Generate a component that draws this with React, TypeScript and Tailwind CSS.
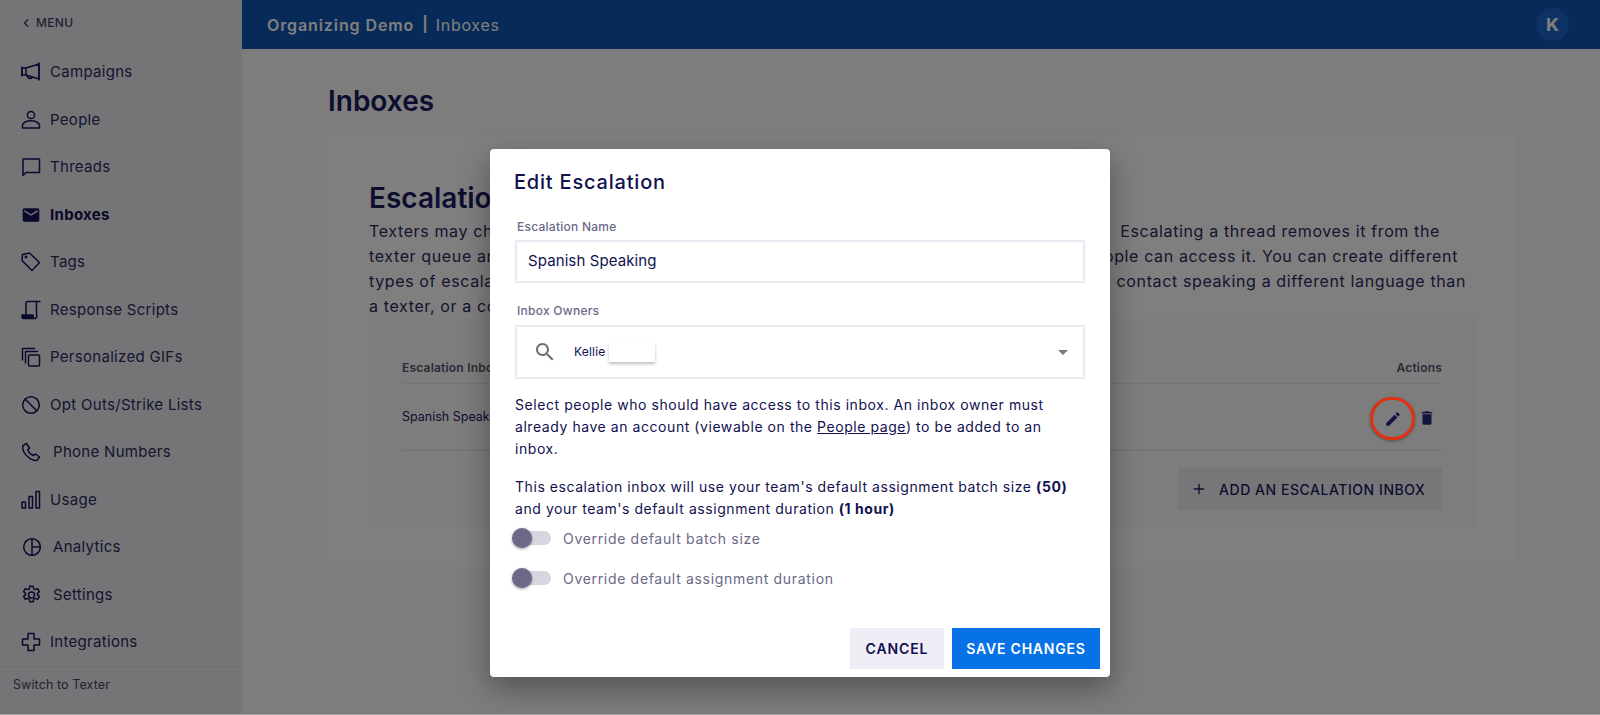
import { ReactNode } from "react";
import { ChevronLeft, Plus } from "lucide-react";

const navy = "#14145a";

const icon = (children: ReactNode) => (
  <svg width="20" height="20" viewBox="0 0 20 20" fill="none" stroke="currentColor" strokeWidth="1.5" strokeLinejoin="round" strokeLinecap="round">
    {children}
  </svg>
);

const navItems: { label: string; icon: ReactNode; active?: boolean; wide?: boolean }[] = [
  {
    label: "Campaigns",
    icon: icon(
      <>
        <path d="M1 6h4l13-4v15L5 13H1z" />
        <path d="M1 5v9M18 1v17M5 6v7" />
        <path d="M6 13.500a3 3 0 0 0 5.500 1.500" />
      </>
    ),
  },
  {
    label: "People",
    icon: icon(
      <>
        <circle cx="10" cy="5" r="3.600" />
        <path d="M1.500 18v-2.500C1.500 12.500 6 10.800 10 10.800s8.500 1.700 8.500 4.700V18z" />
      </>
    ),
  },
  {
    label: "Threads",
    icon: icon(<path d="M2 2h16.500v13.500H5L2 18.500z" />),
  },
  {
    label: "Inboxes",
    active: true,
    icon: (
      <svg width="20" height="20" viewBox="0 0 24 24" fill="currentColor">
        <path d="M20 4H4c-1.100 0-1.990.900-1.990 2L2 18c0 1.100.900 2 2 2h16c1.100 0 2-.900 2-2V6c0-1.100-.900-2-2-2zm0 4l-8 5-8-5V6l8 5 8-5v2z" />
      </svg>
    ),
  },
  {
    label: "Tags",
    icon: icon(
      <>
        <path d="M1.500 2.500 8.500 1l10 9.500-7.500 8-10-10z" />
        <circle cx="5" cy="5" r=".7" />
      </>
    ),
  },
  {
    label: "Response Scripts",
    icon: icon(
      <>
        <path d="M5 14.500V3a1.500 1.500 0 0 1 1.500-1.500H19" />
        <path d="M15.500 1.500V14a4 4 0 0 1-1 4.500" />
        <path d="M1 15h11c0 2 .5 3.500 1.500 3.500H2.500A1.500 1.500 0 0 1 1 17z" fill="currentColor" />
      </>
    ),
  },
  {
    label: "Personalized GIFs",
    icon: icon(
      <>
        <path d="M1.500 13V1.500h12" />
        <path d="M4.500 16V4.500h12" />
        <rect x="7.500" y="8" width="11" height="11" rx="1" />
      </>
    ),
  },
  {
    label: "Opt Outs/Strike Lists",
    icon: icon(
      <>
        <circle cx="10" cy="10" r="8.300" />
        <path d="m4.200 4.200 11.600 11.600" />
      </>
    ),
  },
  {
    label: "Phone Numbers",
    wide: true,
    icon: icon(
      <path d="M5.500 1.500 2 3.500c-1 4 1.500 8 4 10.500s6 5 10 4.500l2.500-3.500-4-3-2.500 1.500c-2-1-4.500-3.500-5.200-5.500L8.500 6z" />
    ),
  },
  {
    label: "Usage",
    icon: icon(
      <>
        <rect x="1" y="12" width="3.500" height="6" />
        <rect x="8" y="6.500" width="3.500" height="11.500" />
        <rect x="15" y="1.500" width="3.500" height="16.500" />
      </>
    ),
  },
  {
    label: "Analytics",
    wide: true,
    icon: icon(
      <>
        <circle cx="11" cy="10" r="8.300" />
        <path d="M11 1.700v16.600M11 10h8.300" />
      </>
    ),
  },
  {
    label: "Settings",
    wide: true,
    icon: icon(
      <>
        <circle cx="10.500" cy="10" r="3" />
        <path d="M8.800 1.200h3.400l.5 2.600 1.500.8 2.500-.9 1.700 2.900-2 1.800v1.200l2 1.800-1.700 2.900-2.500-.9-1.500.8-.5 2.600H8.800l-.5-2.600-1.500-.8-2.500.9-1.700-2.900 2-1.800V8.400l-2-1.800 1.700-2.900 2.500.9 1.500-.8z" />
      </>
    ),
  },
  {
    label: "Integrations",
    icon: icon(<path d="M7 1.500h6v5.500h5.500v6H13v5.500H7V13H1.500V7H7z" />),
  },
];

function Toggle({ label }: { label: string }) {
  return (
    <div className="flex items-center h-[22px]">
      <div className="relative w-[39px] h-[22px] flex items-center">
        <div className="w-[36px] ml-[3px] h-[14px] rounded-full bg-[#d6d5e0]" />
        <div className="absolute left-0 top-[1px] w-[20px] h-[20px] rounded-full bg-[#6b6888] shadow-[0_1px_3px_rgba(0,0,0,0.4)]" />
      </div>
      <span className="ml-[12px] text-[14px] tracking-[0.68px] text-[#6b6888]">{label}</span>
    </div>
  );
}

const bodyLines: [string, string, string][] = [
  ["Texters may choose to escalate a thread if they need", "Escalating a thread removes it from the", "w-[1071px]"],
  ["texter queue and places it in an inbox that only certain pe", "ople can access it. You can create different", "w-[1089px]"],
  ["types of escalation inboxes for different needs, like a ", "contact speaking a different language than", "w-[1097px]"],
  ["a texter, or a contact who needs extra follow up.", "", "w-[1097px]"],
];

export default function App() {
  return (
    <div className="relative w-[1600px] h-[715px] overflow-hidden flex bg-[#fafafa] text-[#1b1b5e] font-['Inter','Liberation_Sans',sans-serif]">
      <aside className="w-[242px] shrink-0 flex flex-col bg-[#eaeaf0]">
        <div className="h-[46px] pt-[2px] mb-[4px] pl-[20px] flex items-center gap-[4px] text-[12px] font-medium tracking-[0.3px] text-[#444466]">
          <ChevronLeft size={12} strokeWidth={3.5} />
          <span>MENU</span>
        </div>
        <nav className="flex flex-col">
          {navItems.map((item) => (
            <div key={item.label} className="h-[47.5px] pl-[21px] flex items-center">
              <span className="w-[20px] flex justify-center" style={{ color: navy }}>{item.icon}</span>
              <span className={`${item.wide ? "ml-[12px]" : "ml-[9px]"} text-[15px] tracking-[0.3px] ${item.active ? "font-bold text-[#101050]" : "text-[#2b2b5c]"}`}>
                {item.label}
              </span>
            </div>
          ))}
        </nav>
        <div className="mt-auto h-[50px] border-t border-[#dcdce4] pl-[13px] pt-[9px] text-[12.500px] tracking-[0.1px] text-[#44445f]">Switch to Texter</div>
      </aside>

      <div className="flex-1 flex flex-col min-w-0">
        <header className="h-[49px] bg-[#1054b0] pl-[25px] pr-[31px] flex items-center text-white">
          <span className="text-[16px] font-semibold tracking-[0.9px]">Organizing Demo</span>
          <span className="mx-[8px] text-[15px] font-bold">|</span>
          <span className="text-[16px] tracking-[0.7px]">Inboxes</span>
          <span className="ml-auto w-[33px] h-[33px] rounded-full bg-[#1a66cc] flex items-center justify-center font-bold text-[18px]">K</span>
        </header>
        <main className="flex-1 pl-[86px] pr-[83px] pt-[34px]">
          <h1 className="text-[28px] leading-[36px] font-semibold text-[#1b1b5e]">Inboxes</h1>
          <section className="mt-[17px] h-[431px] bg-white px-[41px] pt-[44px]">
            <h2 className="text-[28px] leading-[36px] font-semibold">Escalation Inboxes</h2>
            <div className="text-[16px] leading-[25px] tracking-[0.62px] text-[#2b2b5c] mt-[3px]">
              {bodyLines.map(([left, right, width]) => (
                <div key={left} className={`flex justify-between whitespace-nowrap ${width}`}>
                  <span>{left}</span>
                  <span>{right}</span>
                </div>
              ))}
            </div>
            <div className="mt-[-1px] h-[209px] bg-[#fafafc] pl-[33px] pr-[34px] pt-[28px]">
              <div className="h-[38px] flex items-start justify-between text-[12px] font-semibold tracking-[0.2px] text-[#55556f] border-b border-[#ebebf0] pt-[13px]">
                <span>Escalation Inbox</span>
                <span>Actions</span>
              </div>
              <div className="h-[67px] flex items-center justify-between text-[12.500px] border-b border-[#e0e0e6]">
                <span>Spanish Speaking</span>
              </div>
              <div className="mt-[17px] flex justify-end">
                <div className="w-[264px] h-[42px] bg-[#efeff5] flex items-center pl-[13px] gap-[12px] text-[14px] font-medium tracking-[0.55px]">
                  <Plus size={16} />
                  <span>ADD AN ESCALATION INBOX</span>
                </div>
              </div>
            </div>
          </section>
        </main>
      </div>

      <div className="absolute inset-0 bg-black/50 flex justify-center pt-[149px]">
        <div className="w-[620px] h-[528px] bg-white rounded-[4px] shadow-[0_11px_30px_rgba(0,0,0,0.35)] text-[#11114f] flex flex-col pl-[25px] pr-[10px] pt-[21px]">
          <h3 className="-ml-[1px] text-[20px] leading-[24px] font-medium tracking-[0.8px]">Edit Escalation</h3>
          <div className="pr-[15px]">
            <label className="block mt-[25px] ml-[2px] text-[12px] leading-[16px] font-medium tracking-[0.25px] text-[#6b6888]">Escalation Name</label>
            <div className="mt-[5px] h-[43px] border-2 border-[#eaeaf2] flex items-center pl-[11px] text-[15px] tracking-[0.1px]">Spanish Speaking</div>
            <label className="block mt-[20px] ml-[2px] text-[12px] leading-[16px] font-medium tracking-[0.25px] text-[#6b6888]">Inbox Owners</label>
            <div className="mt-[6px] h-[54px] border-2 border-[#eaeaf2] flex items-center pl-[16px] pr-[15px]">
              <svg width="24" height="24" viewBox="0 0 24 24" fill="#6f6f6f">
                <path d="M15.500 14h-.79l-.28-.27C15.410 12.590 16 11.110 16 9.500 16 5.910 13.090 3 9.500 3S3 5.910 3 9.500 5.910 16 9.500 16c1.610 0 3.090-.59 4.230-1.570l.27.28v.79l5 4.990L20.490 19l-4.990-5zm-6 0C7.010 14 5 11.990 5 9.500S7.010 5 9.500 5 14 7.010 14 9.500 11.990 14 9.500 14z" />
              </svg>
              <span className="ml-[17px] text-[12px] tracking-[0.2px]">Kellie</span>
              <span className="ml-[3px] w-[46px] h-[19px] bg-white shadow-[0_2px_3px_rgba(0,0,0,0.25)]" />
              <span className="ml-auto w-0 h-0 border-l-[5px] border-r-[5px] border-t-[5px] border-l-transparent border-r-transparent border-t-[#777]" />
            </div>
            <p className="mt-[15px] text-[14px] leading-[22px] tracking-[0.56px]">
              Select people who should have access to this inbox. An inbox owner must already have an account (viewable on the <span className="underline">People page</span>) to be added to an inbox.
            </p>
            <p className="mt-[16px] text-[14px] leading-[22px] tracking-[0.56px]">
              This escalation inbox will use your team's default assignment batch size <b>(50)</b> and your team's default assignment duration <b>(1 hour)</b>
            </p>
            <div className="mt-[7px] -ml-[3px] flex flex-col gap-[18px]">
              <Toggle label="Override default batch size" />
              <Toggle label="Override default assignment duration" />
            </div>
          </div>
          <div className="mt-auto mb-[8px] flex justify-end gap-[8px]">
            <button className="w-[94px] h-[41px] bg-[#efeef7] text-[14px] font-semibold tracking-[0.9px] text-[#11114f]">CANCEL</button>
            <button className="w-[148px] h-[41px] bg-[#0672e6] text-[14px] font-semibold tracking-[0.8px] text-white">SAVE CHANGES</button>
          </div>
        </div>
      </div>

      {/* annotation and action icons, on top of the dimmer */}
      <div className="absolute left-[1370px] top-[397px] w-[45px] h-[43px] rounded-full border-[3px] border-[#e0300f] shadow-[0_1px_3px_rgba(0,0,0,0.4)] flex items-center justify-center text-[#141440]">
        <svg width="18" height="18" viewBox="0 0 24 24" fill="currentColor">
          <path d="M3 17.250V21h3.750L17.810 9.940l-3.750-3.750L3 17.250zM20.710 7.040c.39-.39.39-1.020 0-1.410l-2.340-2.340c-.39-.39-1.020-.39-1.410 0l-1.830 1.830 3.750 3.750 1.830-1.830z" />
        </svg>
      </div>
      <svg width="18" height="18" viewBox="0 0 24 24" fill="#141440" className="absolute left-[1418px] top-[409px]">
        <path d="M6 19c0 1.100.9 2 2 2h8c1.100 0 2-.9 2-2V7H6v12zM19 4h-3.500l-1-1h-5l-1 1H5v2h14V4z" />
      </svg>
      <div className="absolute left-0 right-0 bottom-0 h-px bg-[#a6a6a6]" />
    </div>
  );
}
